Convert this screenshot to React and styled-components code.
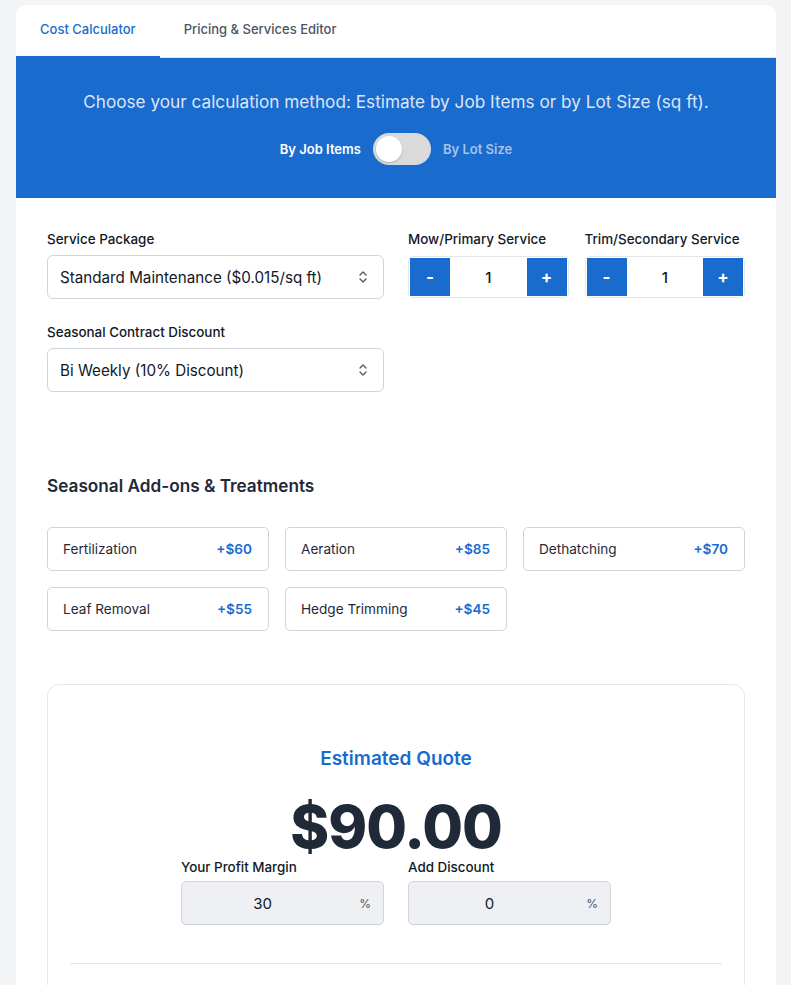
import React, { useState } from 'react';
import styled, { createGlobalStyle } from 'styled-components';

const GlobalStyle = createGlobalStyle`
  body {
    margin: 0;
    background: #f3f4f6;
    font-family: Inter, "Noto Sans", sans-serif;
    color: #1f2937;
  }
`;

const Page = styled.div`
  padding: 5px 15px 0 16px;
`;

const Card = styled.div`
  background: #fff;
  border-radius: 10px 10px 0 0;
  overflow: hidden;
  min-height: 990px;
`;

const Tabs = styled.div`
  display: flex;
  height: 52px;
  border-bottom: 1px solid #e5e7eb;
`;

const Tab = styled.button`
  border: none;
  background: none;
  padding: 0 24px 4px;
  font-family: inherit;
  font-size: 13px;
  font-weight: 500;
  color: ${p => (p.$active ? '#1a6bce' : '#4b5563')};
  border-bottom: 2px solid ${p => (p.$active ? '#1a6bce' : 'transparent')};
  margin-bottom: -1px;
  cursor: pointer;
`;

const Banner = styled.div`
  background: #1a6bce;
  padding: 32px 20px 33px;
  text-align: center;
`;

const BannerText = styled.p`
  margin: 0 0 19px;
  font-size: 17.2px;
  line-height: 24px;
  color: rgba(255, 255, 255, 0.85);
`;

const ToggleRow = styled.div`
  display: flex;
  align-items: center;
  justify-content: center;
  gap: 12px;
`;

const ToggleLabel = styled.span`
  font-size: 13px;
  font-weight: 600;
  color: ${p => (p.$on ? '#fff' : 'rgba(255,255,255,0.6)')};
`;

const Switch = styled.button`
  width: 58px;
  height: 32px;
  border-radius: 16px;
  border: none;
  background: #dadada;
  padding: 3px;
  display: flex;
  justify-content: ${p => (p.$on ? 'flex-end' : 'flex-start')};
  cursor: pointer;
`;

const Knob = styled.span`
  width: 26px;
  height: 26px;
  border-radius: 50%;
  background: #fff;
  box-shadow: 0 1px 2px rgba(0, 0, 0, 0.2);
`;

const Body = styled.div`
  padding: 33px 31px 0;
`;

const FormGrid = styled.div`
  display: grid;
  grid-template-columns: 1fr 1fr;
  column-gap: 24px;
`;

const Column = styled.div`
  display: flex;
  flex-direction: column;
  gap: 25px;
`;

const Steppers = styled.div`
  display: grid;
  grid-template-columns: 1fr 1fr;
  gap: 16px;
  align-self: start;
`;

const Field = styled.div`
  display: flex;
  flex-direction: column;
  gap: 8px;
`;

const Label = styled.label`
  font-size: 13.4px;
  font-weight: 500;
  color: #111827;
  line-height: 16px;
`;

const SelectBox = styled.div`
  height: 44px;
  box-sizing: border-box;
  border: 1px solid #d1d5db;
  border-radius: 6px;
  display: flex;
  align-items: center;
  justify-content: space-between;
  padding: 0 15px 0 12px;
  font-size: 15.2px;
  color: #111827;
`;

const Stepper = styled.div`
  display: flex;
  height: 42px;
  box-sizing: border-box;
  border: 1px solid #e5e7eb;
  border-radius: 5px;
  padding: 1px;
  margin-top: 1px;
`;

const StepButton = styled.button`
  width: 40px;
  border: none;
  background: #1a6bce;
  color: #fff;
  font-family: inherit;
  font-size: 17px;
  font-weight: 700;
  cursor: pointer;
`;

const StepValue = styled.div`
  flex: 1;
  display: flex;
  align-items: center;
  justify-content: center;
  font-size: 15px;
  font-weight: 500;
  color: #111827;
`;

const SectionTitle = styled.h3`
  margin: 83px 0 31px;
  font-size: 17.2px;
  font-weight: 600;
  color: #1f2937;
`;

const AddOnGrid = styled.div`
  display: grid;
  grid-template-columns: repeat(3, 1fr);
  gap: 16px;
`;

const AddOn = styled.div`
  height: 44px;
  box-sizing: border-box;
  border: 1px solid #d1d5db;
  border-radius: 5px;
  display: flex;
  align-items: center;
  justify-content: space-between;
  padding: 0 16px 0 15px;
  font-size: 13.6px;
  color: #1f2937;
`;

const Price = styled.span`
  color: #1a6bce;
  font-weight: 600;
`;

const QuoteBox = styled.div`
  margin-top: 53px;
  border: 1px solid #e5e7eb;
  border-radius: 12px;
  padding: 61px 22px 40px;
  text-align: center;
`;

const QuoteTitle = styled.h2`
  margin: 0;
  font-size: 19px;
  font-weight: 600;
  color: #1a6bce;
  line-height: 26px;
`;

const Total = styled.div`
  font-size: 59px;
  font-weight: 800;
  line-height: 59px;
  letter-spacing: -1px;
  color: #1f2937;
  margin-top: 25px;
`;

const AdjustRow = styled.div`
  display: flex;
  justify-content: center;
  gap: 24px;
  text-align: left;
  margin-top: 3px;
`;

const AdjustField = styled.div`
  width: 203px;
  display: flex;
  flex-direction: column;
  gap: 6px;
`;

const PercentInput = styled.div`
  position: relative;
  height: 44px;
  box-sizing: border-box;
  border: 1px solid #d1d5db;
  border-radius: 5px;
  background: #eff0f3;
  display: flex;
  align-items: center;
  padding-right: 40px;
  font-size: 15px;
  color: #111827;
`;

const InputValue = styled.span`
  flex: 1;
  text-align: center;
`;

const Suffix = styled.span`
  position: absolute;
  right: 12px;
  top: 50%;
  transform: translateY(-50%);
  font-size: 12px;
  color: #4b5563;
`;

const Divider = styled.hr`
  border: none;
  border-top: 1px solid #e5e7eb;
  margin: 38px 0 0;
`;

const Chevrons = () => (
  <svg width="10" height="14" viewBox="0 0 10 14" fill="none" stroke="#555" strokeWidth="1.3" strokeLinecap="round" strokeLinejoin="round">
    <path d="M2 5l3-3 3 3" />
    <path d="M2 9l3 3 3-3" />
  </svg>
);

const addOns = [
  ['Fertilization', 60],
  ['Aeration', 85],
  ['Dethatching', 70],
  ['Leaf Removal', 55],
  ['Hedge Trimming', 45],
];

export default function App() {
  const [lotSize, setLotSize] = useState(false);
  const [mow, setMow] = useState(1);
  const [trim, setTrim] = useState(1);

  return (
    <Page>
      <GlobalStyle />
      <Card>
        <Tabs>
          <Tab $active>Cost Calculator</Tab>
          <Tab>Pricing &amp; Services Editor</Tab>
        </Tabs>
        <Banner>
          <BannerText>
            Choose your calculation method: Estimate by Job Items or by Lot Size (sq ft).
          </BannerText>
          <ToggleRow>
            <ToggleLabel $on={!lotSize}>By Job Items</ToggleLabel>
            <Switch $on={lotSize} onClick={() => setLotSize(!lotSize)}>
              <Knob />
            </Switch>
            <ToggleLabel $on={lotSize}>By Lot Size</ToggleLabel>
          </ToggleRow>
        </Banner>
        <Body>
          <FormGrid>
            <Column>
              <Field>
                <Label>Service Package</Label>
                <SelectBox>
                  Standard Maintenance ($0.015/sq ft)
                  <Chevrons />
                </SelectBox>
              </Field>
              <Field>
                <Label>Seasonal Contract Discount</Label>
                <SelectBox>
                  Bi Weekly (10% Discount)
                  <Chevrons />
                </SelectBox>
              </Field>
            </Column>
            <Steppers>
              <Field>
                <Label>Mow/Primary Service</Label>
                <Stepper>
                  <StepButton onClick={() => setMow(Math.max(0, mow - 1))}>-</StepButton>
                  <StepValue>{mow}</StepValue>
                  <StepButton onClick={() => setMow(mow + 1)}>+</StepButton>
                </Stepper>
              </Field>
              <Field>
                <Label>Trim/Secondary Service</Label>
                <Stepper>
                  <StepButton onClick={() => setTrim(Math.max(0, trim - 1))}>-</StepButton>
                  <StepValue>{trim}</StepValue>
                  <StepButton onClick={() => setTrim(trim + 1)}>+</StepButton>
                </Stepper>
              </Field>
            </Steppers>
          </FormGrid>

          <SectionTitle>Seasonal Add-ons &amp; Treatments</SectionTitle>
          <AddOnGrid>
            {addOns.map(([name, price]) => (
              <AddOn key={name}>
                {name}
                <Price>+${price}</Price>
              </AddOn>
            ))}
          </AddOnGrid>

          <QuoteBox>
            <QuoteTitle>Estimated Quote</QuoteTitle>
            <Total>$90.00</Total>
            <AdjustRow>
              <AdjustField>
                <Label>Your Profit Margin</Label>
                <PercentInput>
                  <InputValue>30</InputValue>
                  <Suffix>%</Suffix>
                </PercentInput>
              </AdjustField>
              <AdjustField>
                <Label>Add Discount</Label>
                <PercentInput>
                  <InputValue>0</InputValue>
                  <Suffix>%</Suffix>
                </PercentInput>
              </AdjustField>
            </AdjustRow>
            <Divider />
          </QuoteBox>
        </Body>
      </Card>
    </Page>
  );
}
